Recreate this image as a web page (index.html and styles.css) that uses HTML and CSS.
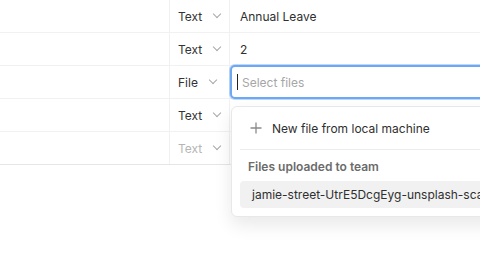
FILE: index.html
```html
<!DOCTYPE html>
<html lang="en">
<head>
  <meta charset="UTF-8" />
  <title>Fields</title>
  <link rel="stylesheet" href="styles.css">
</head>
<body>
  <div class="page">
    <div class="grid">
      <div class="row">
        <div class="cell name"></div>
        <div class="cell type">Text <span class="chev"></span></div>
        <div class="cell value">Annual Leave</div>
      </div>
      <div class="row">
        <div class="cell name"></div>
        <div class="cell type">Text <span class="chev"></span></div>
        <div class="cell value">2</div>
      </div>
      <div class="row">
        <div class="cell name"></div>
        <div class="cell type">File <span class="chev"></span></div>
        <div class="cell value editing">
          <div class="editor"><span class="caret"></span><span class="placeholder">Select files</span></div>
          <div class="menu">
            <div class="menu-action">
              <svg class="plus" width="12" height="12" viewBox="0 0 12 12"><path d="M6 0.5v11M0.5 6h11" stroke="#8a8a8a" stroke-width="1.3" fill="none"/></svg>
              <span>New file from local machine</span>
            </div>
            <div class="menu-divider"></div>
            <div class="menu-heading">Files uploaded to team</div>
            <div class="menu-item">jamie-street-UtrE5DcgEyg-unsplash-sca</div>
          </div>
        </div>
      </div>
      <div class="row">
        <div class="cell name"></div>
        <div class="cell type">Text <span class="chev"></span></div>
        <div class="cell value"></div>
      </div>
      <div class="row last">
        <div class="cell name"></div>
        <div class="cell type muted">Text <span class="chev"></span></div>
        <div class="cell value"></div>
      </div>
    </div>
  </div>
</body>
</html>
```

FILE: styles.css
```css
* {
  margin: 0;
  padding: 0;
  box-sizing: border-box;
}

body {
  font-family: 'Inter', 'Noto Sans', sans-serif;
  background: #fff;
  color: #2b2b2b;
}

.page {
  width: 480px;
  height: 270px;
  overflow: hidden;
}

.grid {
  width: 100%;
}

.row {
  display: grid;
  grid-template-columns: 169px 61px 1fr;
  height: 33px;
  border-bottom: 1px solid #f1f1f1;
}

.row.last {
  border-bottom-color: #e6e6e6;
}

.cell {
  display: flex;
  align-items: center;
  font-size: 12px;
}

.type {
  border-left: 1px solid #f1f1f1;
  border-right: 1px solid #f1f1f1;
  padding-left: 8px;
  color: #333;
}

.type.muted {
  color: #b5b5b5;
}

.chev {
  width: 6px;
  height: 6px;
  border-right: 1px solid #a8a8a8;
  border-bottom: 1px solid #a8a8a8;
  transform: rotate(45deg);
  margin-left: 12px;
  margin-top: -4px;
}

.value {
  padding-left: 10px;
  font-size: 12px;
  color: #2f2f2f;
}

.editing {
  position: relative;
}

.editor {
  position: absolute;
  left: 0;
  top: -1px;
  right: -20px;
  bottom: -1px;
  border: 2px solid #6fa8f2;
  box-shadow: 0 0 0 1px rgba(111, 168, 242, 0.45);
  border-radius: 5px;
  background: #fff;
  display: flex;
  align-items: center;
  padding-left: 5px;
}

.caret {
  width: 1px;
  height: 16px;
  background: #222;
  margin-right: 4px;
}

.placeholder {
  color: #a6a6a6;
  font-size: 12px;
}

.menu {
  position: absolute;
  left: 1px;
  top: 40px;
  width: 300px;
  background: #fff;
  border: 1px solid #e8e8e8;
  border-radius: 6px;
  box-shadow: 0 8px 18px rgba(0, 0, 0, 0.09);
  padding: 0 8px 8px;
  z-index: 10;
}

.menu-action {
  display: flex;
  align-items: center;
  height: 42px;
  padding-left: 10px;
  gap: 10px;
  font-size: 12px;
  color: #2f2f2f;
}

.menu-divider {
  height: 1px;
  background: #ececec;
}

.menu-heading {
  font-size: 12px;
  font-weight: 600;
  color: #6b6b6b;
  padding: 9px 0 0 8px;
  height: 31px;
}

.menu-item {
  background: #f1f1f1;
  border-radius: 4px;
  height: 27px;
  display: flex;
  align-items: center;
  padding-left: 12px;
  font-size: 12px;
  color: #2f2f2f;
  white-space: nowrap;
  overflow: hidden;
}
```
